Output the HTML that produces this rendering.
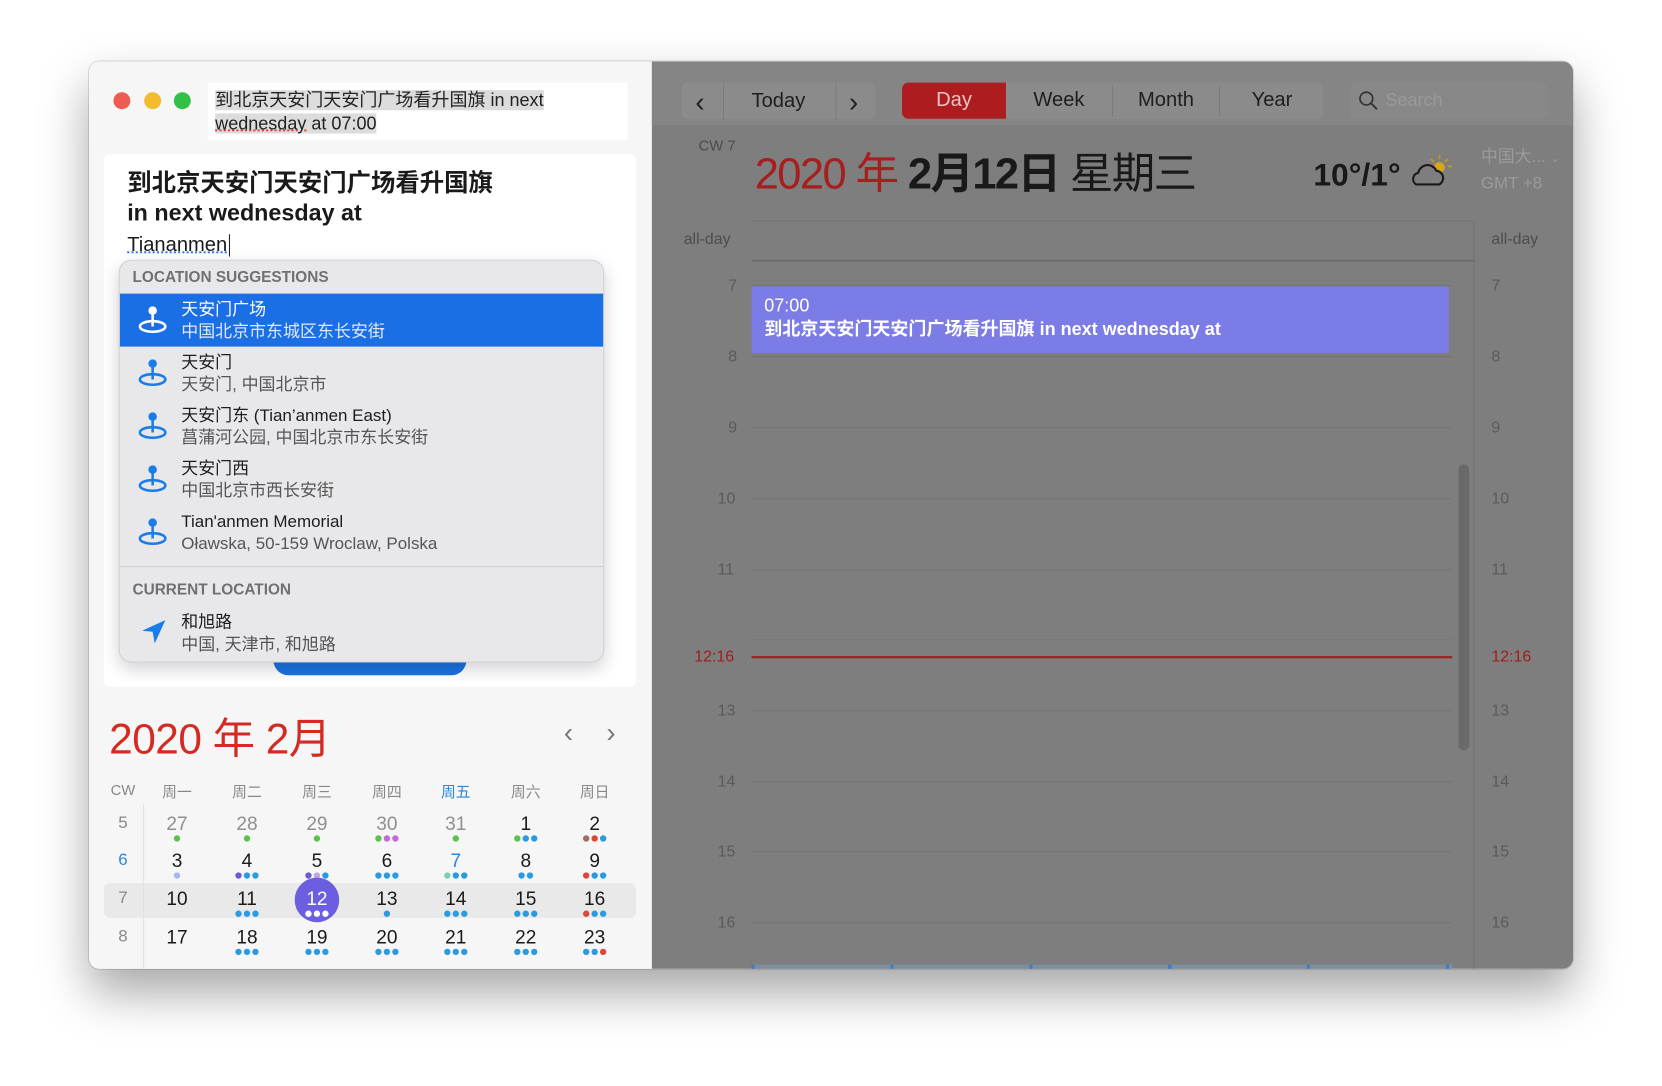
<!DOCTYPE html>
<html><head><meta charset="utf-8"><style>
*{margin:0;padding:0;box-sizing:border-box}
html,body{width:1662px;height:1086px;overflow:hidden;background:#fff}
body{font-family:"Liberation Sans","Noto Sans CJK SC",sans-serif}
#s{position:absolute;left:0;top:0;width:1568px;height:1024px;transform:scale(1.06);transform-origin:0 0}
.a{position:absolute;white-space:nowrap}
.win{left:84px;top:58px;width:1400px;height:856px;border-radius:10px;overflow:hidden;background:#f6f6f6;box-shadow:0 22px 45px rgba(0,0,0,.35),0 0 0 1px rgba(0,0,0,.12)}
.dot{display:inline-block;width:6px;height:6px;border-radius:3px;margin:0 1px}
.row .t{font-size:16px;color:#1d1d1d}
.row .sub{font-size:16px;color:#555}
.hr{position:absolute;left:709px;width:661px;height:1px;background:#747474}
.lab{position:absolute;font-size:15px;color:#5a5a5a}
</style></head><body><div id="s">
<div class="a win">
 <div class="a" style="left:0;top:0;width:531px;height:856px;background:#f6f6f6"></div>
 <div class="a" style="left:23px;top:29px;width:16px;height:16px;border-radius:8px;background:#ee5b53"></div>
 <div class="a" style="left:52px;top:29px;width:16px;height:16px;border-radius:8px;background:#f5bb2f"></div>
 <div class="a" style="left:80px;top:29px;width:16px;height:16px;border-radius:8px;background:#32c146"></div>
 <div class="a" style="left:112px;top:20px;width:396px;height:54px;background:#fff"></div>
 <div class="a" style="left:119px;top:26px;font-size:17px;line-height:22px;color:#222"><span style="background:#dcdcdc">到北京天安门天安门广场看升国旗 in next</span><br><span style="background:#dcdcdc"><span style="text-decoration:underline dotted #e33">wednesday</span> at 07:00</span></div>
 <div class="a" style="left:14px;top:87px;width:502px;height:503px;background:#fff;border-radius:6px"></div>
 <div class="a" style="left:36px;top:100px;font-size:23px;font-weight:bold;line-height:28px;color:#1a1a1a">到北京天安门天安门广场看升国旗<br><span style="font-size:22px">in next wednesday at</span></div>
 <div class="a" style="left:36px;top:163px;font-size:19px;color:#1a1a1a"><span style="text-decoration:underline dotted #3a7be0">Tiananmen</span> <span style="border-left:1.5px solid #222;margin-left:2px"> </span></div>
 <div class="a" style="left:174px;top:553px;width:182px;height:26px;border-radius:0 0 14px 14px;background:#1a74e2"></div>
 <div class="a" style="left:28px;top:187px;width:458px;height:380px;background:#e8e8ea;border-radius:12px;border:1px solid #d2d2d4;box-shadow:0 6px 16px rgba(0,0,0,.18);overflow:hidden">
  <div class="a" style="left:12px;top:8px;font-size:14.5px;font-weight:bold;color:#707070">LOCATION SUGGESTIONS</div>
  <div class="a" style="left:0;top:31px;width:458px;height:50px;background:#1b6fe4"></div>
  <div class="a" style="left:0;top:288px;width:458px;height:1px;background:#d0d0d2"></div>
  <div class="a" style="left:12px;top:303px;font-size:14.5px;font-weight:bold;color:#707070">CURRENT LOCATION</div>
 </div>
 <div class="a row" style="left:87px;top:224px;line-height:21px"><div class="t" style="color:#fff">天安门广场</div><div class="sub" style="color:#dfe9fb">中国北京市东城区东长安街</div></div>
 <div class="a row" style="left:87px;top:274px;line-height:21px"><div class="t">天安门</div><div class="sub">天安门, 中国北京市</div></div>
 <div class="a row" style="left:87px;top:324px;line-height:21px"><div class="t">天安门东 (Tian’anmen East)</div><div class="sub">菖蒲河公园, 中国北京市东长安街</div></div>
 <div class="a row" style="left:87px;top:374px;line-height:21px"><div class="t">天安门西</div><div class="sub">中国北京市西长安街</div></div>
 <div class="a row" style="left:87px;top:424px;line-height:21px"><div class="t">Tian'anmen Memorial</div><div class="sub">Oławska, 50-159 Wroclaw, Polska</div></div>
 <div class="a row" style="left:87px;top:519px;line-height:21px"><div class="t">和旭路</div><div class="sub">中国, 天津市, 和旭路</div></div>
 <svg class="a" style="left:44px;top:227px" width="32" height="32" viewBox="0 0 32 32"><circle cx="16" cy="8" r="4" fill="#fff"/><path d="M16 11v12" stroke="#fff" stroke-width="2.4"/><ellipse cx="16" cy="23" rx="12" ry="5" fill="none" stroke="#fff" stroke-width="2.4"/></svg>
 <svg class="a" style="left:44px;top:277px" width="32" height="32" viewBox="0 0 32 32"><circle cx="16" cy="8" r="4" fill="#1a7ce6"/><path d="M16 11v12" stroke="#1a7ce6" stroke-width="2.4"/><ellipse cx="16" cy="23" rx="12" ry="5" fill="none" stroke="#1a7ce6" stroke-width="2.4"/></svg>
 <svg class="a" style="left:44px;top:327px" width="32" height="32" viewBox="0 0 32 32"><circle cx="16" cy="8" r="4" fill="#1a7ce6"/><path d="M16 11v12" stroke="#1a7ce6" stroke-width="2.4"/><ellipse cx="16" cy="23" rx="12" ry="5" fill="none" stroke="#1a7ce6" stroke-width="2.4"/></svg>
 <svg class="a" style="left:44px;top:377px" width="32" height="32" viewBox="0 0 32 32"><circle cx="16" cy="8" r="4" fill="#1a7ce6"/><path d="M16 11v12" stroke="#1a7ce6" stroke-width="2.4"/><ellipse cx="16" cy="23" rx="12" ry="5" fill="none" stroke="#1a7ce6" stroke-width="2.4"/></svg>
 <svg class="a" style="left:44px;top:427px" width="32" height="32" viewBox="0 0 32 32"><circle cx="16" cy="8" r="4" fill="#1a7ce6"/><path d="M16 11v12" stroke="#1a7ce6" stroke-width="2.4"/><ellipse cx="16" cy="23" rx="12" ry="5" fill="none" stroke="#1a7ce6" stroke-width="2.4"/></svg>
 <svg class="a" style="left:48px;top:525px" width="26" height="26" viewBox="0 0 26 26"><path d="M24 2 L2 12 L12 13 L14 24 Z" fill="#1a7ce6"/></svg>
 <div class="a" style="left:19px;top:607px;font-size:40px;color:#d42a24;letter-spacing:-0.5px">2020 年 2月</div>
 <div class="a" style="left:448px;top:618px;font-size:26px;color:#777">&#x2039;</div>
 <div class="a" style="left:488px;top:618px;font-size:26px;color:#777">&#x203A;</div>
 <div class="a" style="left:14px;top:775px;width:502px;height:33px;background:#e9e9e9;border-radius:6px"></div>
 <div class="a" style="left:51px;top:700px;width:1px;height:160px;background:#e0e0e0"></div>
 <div id="mc"></div>
 <div class="a" style="left:531px;top:0;width:869px;height:856px;background:#7e7e7e"></div>
 <div class="a" style="left:531px;top:0;width:869px;height:60px;background:#858585"></div>
 <div class="a" style="left:559px;top:20px;width:183px;height:34px;background:#8b8b8b;border-radius:6px"></div>
 <div class="a" style="left:598px;top:20px;width:1px;height:34px;background:#7c7c7c"></div>
 <div class="a" style="left:704px;top:20px;width:1px;height:34px;background:#7c7c7c"></div>
 <div class="a" style="left:572px;top:21px;font-size:26px;line-height:34px;color:#1e1e1e">&#x2039;</div>
 <div class="a" style="left:625px;top:21px;font-size:19px;line-height:34px;color:#1e1e1e">Today</div>
 <div class="a" style="left:717px;top:21px;font-size:26px;line-height:34px;color:#1e1e1e">&#x203A;</div>
 <div class="a" style="left:767px;top:20px;width:397px;height:34px;background:#8b8b8b;border-radius:6px"></div>
 <div class="a" style="left:767px;top:20px;width:98px;height:34px;background:#ad1c1e;border-radius:6px 0 0 6px;color:#e8c4c4;font-size:19px;line-height:34px;text-align:center">Day</div>
 <div class="a" style="left:865px;top:20px;width:100px;font-size:19px;line-height:34px;text-align:center;color:#1e1e1e">Week</div>
 <div class="a" style="left:966px;top:20px;width:100px;font-size:19px;line-height:34px;text-align:center;color:#1e1e1e">Month</div>
 <div class="a" style="left:1066px;top:20px;width:100px;font-size:19px;line-height:34px;text-align:center;color:#1e1e1e">Year</div>
 <div class="a" style="left:965px;top:22px;width:1px;height:30px;background:#7c7c7c"></div>
 <div class="a" style="left:1066px;top:22px;width:1px;height:30px;background:#7c7c7c"></div>
 <div class="a" style="left:1189px;top:20px;width:187px;height:34px;background:#888;border-radius:6px"></div>
 <svg class="a" style="left:1197px;top:27px" width="20" height="20" viewBox="0 0 20 20"><circle cx="8" cy="8" r="6" fill="none" stroke="#333" stroke-width="1.6"/><path d="M12.5 12.5 L18 18" stroke="#333" stroke-width="1.8"/></svg>
 <div class="a" style="left:1223px;top:20px;font-size:17px;line-height:34px;color:#9a9a9a">Search</div>
 <div class="a" style="left:575px;top:71px;font-size:14px;color:#4c4c4c">CW 7</div>
 <div class="a" style="left:628px;top:80px;font-size:41px;line-height:52px;color:#a71e1e;letter-spacing:-1.5px">2020 年 <span style="color:#191919;font-weight:bold">2月12日</span> <span style="color:#191919">星期三</span></div>
 <div class="a" style="left:1155px;top:91px;font-size:30px;font-weight:bold;color:#191919">10°/1°</div>
 <svg class="a" style="left:1244px;top:86px" width="44" height="36" viewBox="0 0 44 36"><g stroke="#c99a12" stroke-width="1.5"><path d="M30 2v4M38 6l-3 3M42 13h-4M22 6l3 3"/></g><circle cx="30" cy="14" r="5" fill="#d9a615"/><path d="M8 30 a6 6 0 0 1 2-11 a9 9 0 0 1 17-2 a7 7 0 0 1 3 13 Z" fill="#7e7e7e" stroke="#1a1a1a" stroke-width="2"/></svg>
 <div class="a" style="left:1313px;top:79px;font-size:16px;color:#9b9b9b;line-height:23px">中国大... <span style="font-size:11px">&#x2304;</span><br>GMT +8</div>
 <div class="a" style="left:625px;top:150px;width:681px;height:1px;background:#747474"></div>
 <div class="a" style="left:625px;top:187px;width:681px;height:2px;background:#6e6e6e"></div>
 <div class="a" style="left:1306px;top:150px;width:1px;height:706px;background:#707070"></div>
 <div class="a" style="left:1292px;top:380px;width:10px;height:270px;background:#6a6a6a;border-radius:5px"></div>
 <div class="lab" style="left:561px;top:159px;color:#4d4d4d">all-day</div>
 <div class="lab" style="left:1323px;top:159px;color:#4d4d4d">all-day</div>
</div>
<div id="grid"></div>
<div class="a" style="left:709px;top:270px;width:658px;height:63px;background:#7b7ce6;border-radius:2px"></div>
<div class="a" style="left:721px;top:278px;font-size:17px;line-height:22px;color:#fff">07:00<br><b>到北京天安门天安门广场看升国旗 in next wednesday at</b></div>
<div class="a" style="left:709px;top:619px;width:661px;height:2px;background:#a41b1b"></div>
<div class="a" style="left:655px;top:611px;font-size:15px;color:#a41b1b">12:16</div>
<div class="a" style="left:1407px;top:611px;font-size:15px;color:#a41b1b">12:16</div>
<div class="a" style="left:709px;top:910px;width:661px;height:4px;background:repeating-linear-gradient(90deg,#3b7fc4 0 3px,#7e8ea0 3px 131px)"></div>
<script>
var g='';var hs=[[7,269],[8,336],[9,403],[10,470],[11,537],[13,670],[14,737],[15,803],[16,870]];
hs.forEach(function(h){g+='<div class="hr" style="top:'+h[1]+'px"></div><div class="lab" style="left:'+(h[0]>9?677:687)+'px;top:'+(h[1]-8)+'px">'+h[0]+'</div><div class="lab" style="left:1407px;top:'+(h[1]-8)+'px">'+h[0]+'</div>';});
g+='<div class="hr" style="top:603px;background:#777"></div>';
document.getElementById('grid').innerHTML=g;
var cols=[167,233,299,365,430,496,561],m='';
var hd=['周一','周二','周三','周四','周五','周六','周日'];
m+='<div class="a" style="left:20px;top:679px;font-size:14px;color:#888;width:24px;text-align:center">CW</div>';
hd.forEach(function(d,i){m+='<div class="a" style="left:'+(cols[i]-84-25)+'px;top:679px;width:50px;text-align:center;font-size:14px;color:'+(i==4?'#2a86d8':'#888')+'">'+d+'</div>';});
var G='#5ac34c',B='#2a9be0',P='#c46ad6',R='#e0453a',V='#6a5cd6',L='#a9b6ee',K='#c7a0e0',T='#7ecfb0',N='#9b7060';
var rows=[[5,778,[[27,1,[G]],[28,1,[G]],[29,1,[G]],[30,1,[G,P,P]],[31,1,[G]],[1,0,[G,B,B]],[2,0,[N,R,B]]]],
[6,813,[[3,0,[L]],[4,0,[V,B,B]],[5,0,[V,K,B]],[6,0,[B,B,B]],[7,2,[T,B,B]],[8,0,[B,B]],[9,0,[R,B,B]]]],
[7,849,[[10,0,[]],[11,0,[B,B,B]],[12,3,['#fff','#fff','#fff']],[13,0,[B]],[14,0,[B,B,B]],[15,0,[B,B,B]],[16,0,[R,B,B]]]],
[8,885,[[17,0,[]],[18,0,[B,B,B]],[19,0,[B,B,B]],[20,0,[B,B,B]],[21,0,[B,B,B]],[22,0,[B,B,B]],[23,0,[B,B,R]]]]];
rows.forEach(function(r){var y=r[1]-58;
m+='<div class="a" style="left:20px;top:'+(y-10)+'px;width:24px;text-align:center;font-size:16px;color:'+(r[0]==6?'#2a86d8':'#888')+'">'+r[0]+'</div>';
r[2].forEach(function(c,i){var x=cols[i]-84;var col=c[1]==1?'#8f8f8f':c[1]==2?'#2a86d8':c[1]==3?'#fff':'#1a1a1a';
if(c[1]==3)m+='<div class="a" style="left:'+(x-21)+'px;top:'+(y-21)+'px;width:42px;height:42px;border-radius:21px;background:#6b5ee0"></div>';
m+='<div class="a" style="left:'+(x-25)+'px;top:'+(y-11)+'px;width:50px;text-align:center;font-size:18px;color:'+col+'">'+c[0]+'</div>';
m+='<div class="a" style="left:'+(x-25)+'px;top:'+(y+10)+'px;width:50px;text-align:center;line-height:6px;font-size:0">'+c[2].map(function(d){return '<span class="dot" style="background:'+d+'"></span>'}).join('')+'</div>';});});
document.getElementById('mc').innerHTML=m;
</script>
</div></body></html>
